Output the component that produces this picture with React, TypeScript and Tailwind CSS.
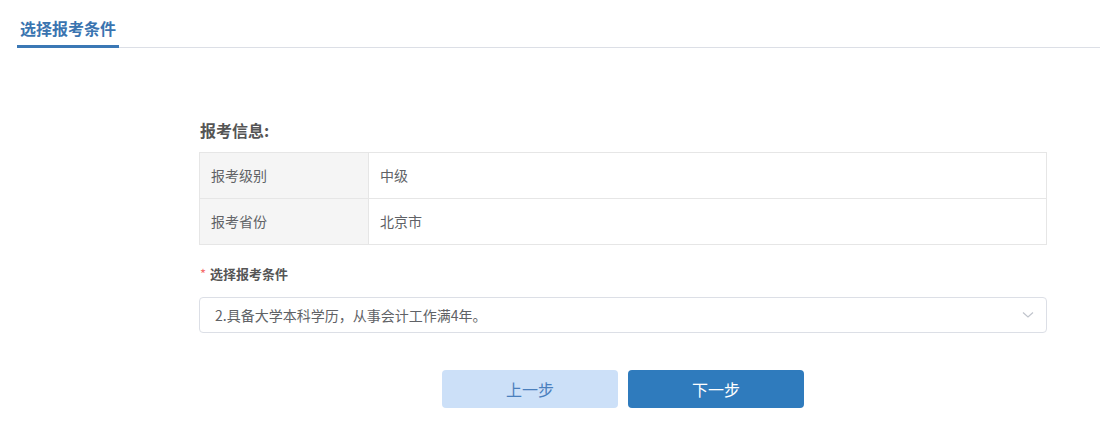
import React from "react";

export default function App() {
  const font = { fontFamily: '"Noto Sans CJK SC", "Noto Sans", "Liberation Sans", sans-serif' };
  return (
    <div className="w-[1100px] h-[431px] bg-white" style={font}>
      <div className="pl-[17px] pt-[16px]">
        <div className="border-b border-[#dcdfe6] flex">
          <div className="w-[102px] border-b-[3px] border-[#3b78b5] -mb-[1px] pb-[5px] pl-[3px] text-[16px] leading-[24px] font-bold text-[#3a74b0]">
            选择报考条件
          </div>
        </div>
      </div>
      <div className="ml-[199px] w-[848px] pt-[71px]">
        <div className="text-[16px] leading-[22px] font-bold text-[#555] pl-[1px]">报考信息:</div>
        <div className="mt-[11px] border border-[#e6e6e6] text-[14px] text-[#606266]">
          <div className="flex h-[46px] border-b border-[#e6e6e6]">
            <div className="w-[169px] bg-[#f5f5f5] border-r border-[#e6e6e6] flex items-center pl-[11px]">报考级别</div>
            <div className="flex-1 flex items-center pl-[11px]">中级</div>
          </div>
          <div className="flex h-[45px]">
            <div className="w-[169px] bg-[#f5f5f5] border-r border-[#e6e6e6] flex items-center pl-[11px]">报考省份</div>
            <div className="flex-1 flex items-center pl-[11px]">北京市</div>
          </div>
        </div>
        <div className="mt-[20px] text-[13px] leading-[18px] font-bold text-[#555] flex items-center">
          <span className="text-[#f56c6c] font-normal mr-[4px] ml-[1px]">*</span>选择报考条件
        </div>
        <div className="mt-[14px] h-[36px] border border-[#dcdfe6] rounded-[4px] flex items-center justify-between pl-[15px] pr-[12px] text-[14px] text-[#606266]">
          <span>2.具备大学本科学历，从事会计工作满4年。</span>
          <svg width="12" height="8" viewBox="0 0 12 8" fill="none">
            <path d="M1 1.5 L6 6 L11 1.5" stroke="#c0c4cc" strokeWidth="1.2" />
          </svg>
        </div>
        <div className="mt-[37px] flex justify-center gap-[10px]">
          <button className="w-[176px] h-[38px] rounded-[4px] bg-[#cce0f8] text-[#4a7fbd] text-[16px]">上一步</button>
          <button className="w-[176px] h-[38px] rounded-[4px] bg-[#2f7bbd] text-white text-[16px]">下一步</button>
        </div>
      </div>
    </div>
  );
}
